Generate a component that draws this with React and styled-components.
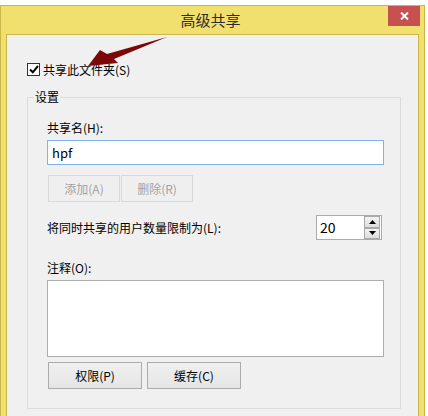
import React from "react";
import styled, { createGlobalStyle } from "styled-components";

const GlobalStyle = createGlobalStyle`
  body {
    margin: 0;
    background: #ffffff;
    overflow: hidden;
    font-family: "Noto Sans CJK SC", "Noto Sans", sans-serif;
    font-size: 12px;
    color: #000;
  }
`;

const Window = styled.div`
  box-sizing: border-box;
  margin-top: 5px;
  width: 425px;
  height: 411px;
  border: 1px solid #c9b74c;
  border-bottom: none;
  background: #f2e06e;
  padding: 0 5px;
  display: flex;
  flex-direction: column;
`;

const TitleBar = styled.div`
  height: 28px;
  margin: 0 -5px;
  padding-right: 4px;
  display: grid;
  grid-template-columns: 1fr auto 1fr;
  align-items: center;
`;

const Title = styled.div`
  grid-column: 2;
  font-size: 15px;
  line-height: 18px;
  color: #2b2b2b;
`;

const CloseButton = styled.div`
  grid-column: 3;
  justify-self: end;
  align-self: start;
  width: 32px;
  height: 20px;
  background: #c75050;
  display: flex;
  align-items: center;
  justify-content: center;
`;

const Client = styled.div`
  position: relative;
  flex: 1;
  box-sizing: border-box;
  border: 1px solid #c9b74c;
  border-bottom: none;
  background: #f0f0f0;
  padding: 28px 17px 0 20px;
`;

const CheckRow = styled.label`
  display: flex;
  align-items: center;
  gap: 3px;
  height: 13px;
  line-height: 13px;
`;

const CheckBox = styled.span`
  box-sizing: border-box;
  width: 13px;
  height: 13px;
  border: 1px solid #333;
  background: #fff;
  display: flex;
  align-items: center;
  justify-content: center;
`;

const Arrow = styled.svg`
  position: absolute;
  left: 73px;
  top: -1px;
`;

const Group = styled.div`
  position: relative;
  margin-top: 21px;
  border: 1px solid #dcdcdc;
  padding: 22px 16px 19px 19px;
  display: flex;
  flex-direction: column;
`;

const Legend = styled.span`
  position: absolute;
  top: -9px;
  left: 6px;
  padding: 0 1px;
  background: #f0f0f0;
  line-height: 16px;
`;

const FieldLabel = styled.div`
  line-height: 16px;
  margin-top: ${(p) => p.$top || 0}px;
  margin-bottom: 4px;
`;

const TextInput = styled.div`
  box-sizing: border-box;
  height: 25px;
  border: 1px solid #7eb4ea;
  background: #fff;
  padding-left: 4px;
  font-size: 13px;
  line-height: 23px;
`;

const TextArea = styled.div`
  box-sizing: border-box;
  height: 77px;
  border: 1px solid #adadad;
  background: #fff;
`;

const ButtonRow = styled.div`
  display: flex;
  gap: ${(p) => p.$gap}px;
  margin-top: ${(p) => p.$top}px;
  margin-left: 1px;
`;

const Button = styled.div`
  box-sizing: border-box;
  width: ${(p) => p.$width}px;
  height: 27px;
  display: flex;
  align-items: center;
  justify-content: center;
  border: 1px solid ${(p) => (p.$disabled ? "#d9d9d9" : "#acacac")};
  background: ${(p) =>
    p.$disabled ? "#efefef" : "linear-gradient(#f0f0f0, #e5e5e5)"};
  color: ${(p) => (p.$disabled ? "#a3a3a3" : "#000")};
`;

const LimitRow = styled.div`
  display: flex;
  align-items: center;
  justify-content: space-between;
  margin-top: 13px;
  padding-right: 2px;
`;

const SpinBox = styled.div`
  box-sizing: border-box;
  width: 66px;
  height: 25px;
  border: 1px solid #ababab;
  background: #fff;
  display: flex;
`;

const SpinValue = styled.div`
  flex: 1;
  padding-left: 3px;
  font-size: 14px;
  line-height: 23px;
`;

const SpinButtons = styled.div`
  width: 16px;
  margin-right: 1px;
  display: flex;
  flex-direction: column;
`;

const SpinButton = styled.div`
  flex: 1;
  box-sizing: border-box;
  border: 1px solid #a8a8a8;
  background: linear-gradient(#f2f2f2, #dedede);
  display: flex;
  align-items: center;
  justify-content: center;
`;

function Triangle({ up }) {
  return (
    <svg width="7" height="4" viewBox="0 0 7 4">
      <polygon points={up ? "3.5,0 7,4 0,4" : "0,0 7,0 3.5,4"} fill="#000" />
    </svg>
  );
}

export default function App() {
  return (
    <>
      <GlobalStyle />
      <Window>
        <TitleBar>
          <Title>高级共享</Title>
          <CloseButton>
            <svg width="9" height="8" viewBox="0 0 9 8">
              <path d="M1 0.5 L8 7.5 M8 0.5 L1 7.5" stroke="#fff" strokeWidth="2" />
            </svg>
          </CloseButton>
        </TitleBar>
        <Client>
          <CheckRow>
            <CheckBox>
              <svg width="10" height="9" viewBox="0 0 10 9">
                <path d="M1 4.5 L3.8 7.3 L9 1" stroke="#000" strokeWidth="2" fill="none" />
              </svg>
            </CheckBox>
            共享此文件夹(S)
          </CheckRow>
          <Arrow width="90" height="36" viewBox="0 0 90 36">
            <polygon points="8,32 20,16 27,20 87,3 34,25 38,29" fill="#7d0606" />
          </Arrow>
          <Group>
            <Legend>设置</Legend>
            <FieldLabel>共享名(H):</FieldLabel>
            <TextInput>hpf</TextInput>
            <ButtonRow $gap={1} $top={10}>
              <Button $width={72} $disabled>添加(A)</Button>
              <Button $width={72} $disabled>删除(R)</Button>
            </ButtonRow>
            <LimitRow>
              <span>将同时共享的用户数量限制为(L):</span>
              <SpinBox>
                <SpinValue>20</SpinValue>
                <SpinButtons>
                  <SpinButton><Triangle up /></SpinButton>
                  <SpinButton><Triangle /></SpinButton>
                </SpinButtons>
              </SpinBox>
            </LimitRow>
            <FieldLabel $top={20}>注释(O):</FieldLabel>
            <TextArea />
            <ButtonRow $gap={5} $top={5}>
              <Button $width={94}>权限(P)</Button>
              <Button $width={94}>缓存(C)</Button>
            </ButtonRow>
          </Group>
        </Client>
      </Window>
    </>
  );
}
